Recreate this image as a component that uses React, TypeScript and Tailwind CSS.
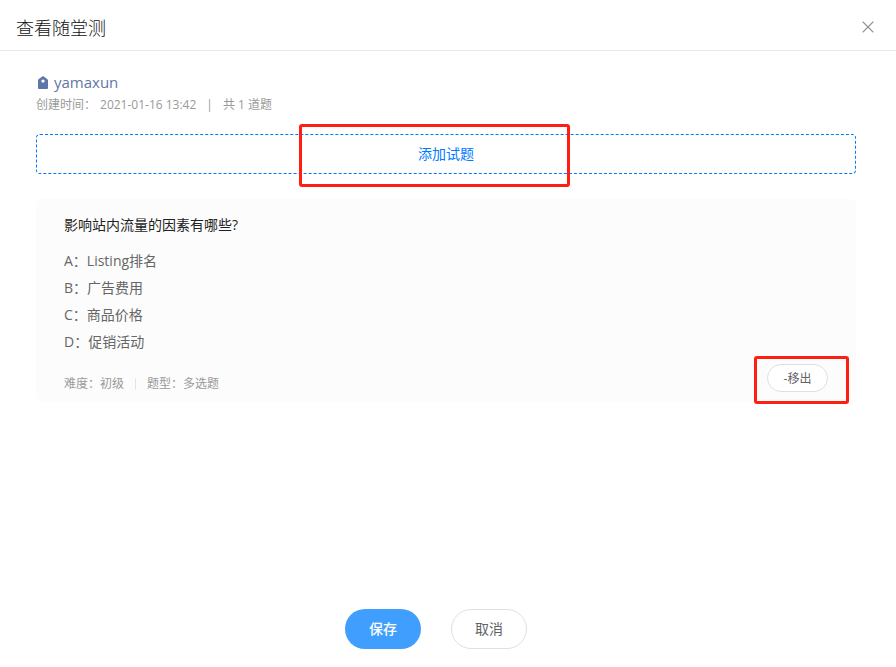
import { X } from 'lucide-react';

const question = {
  title: '影响站内流量的因素有哪些?',
  options: [
    { key: 'A', text: 'Listing排名' },
    { key: 'B', text: '广告费用' },
    { key: 'C', text: '商品价格' },
    { key: 'D', text: '促销活动' },
  ],
  level: '初级',
  type: '多选题',
};

function TagIcon() {
  return (
    <svg viewBox="0 0 10 13" className="w-[10px] h-[13px]" fill="#5f76a8" aria-hidden="true">
      <path
        fillRule="evenodd"
        d="M5 0 9.2 2.9Q10 3.5 10 4.5V12Q10 13 9 13H1Q0 13 0 12V4.5Q0 3.5.8 2.9ZM5 3.4A1.7 1.7 0 1 0 5 6.8 1.7 1.7 0 1 0 5 3.4Z"
      />
    </svg>
  );
}

function Highlight({ className }: { className: string }) {
  return (
    <div
      className={`absolute border-3 border-[#ff1e12] rounded-[3px] pointer-events-none ${className}`}
    />
  );
}

export default function App() {
  return (
    <div className="min-h-screen flex flex-col bg-white font-['Open_Sans','Noto_Sans_CJK_SC',sans-serif]">
      {/* Header */}
      <header className="flex items-center justify-between h-[51px] pt-1 pl-4 pr-[18px] border-b border-[#ebebeb]">
        <h1 className="pt-[2px] text-lg font-light text-[#111111]">查看随堂测</h1>
        <button type="button" aria-label="关闭" className="text-[#909399]">
          <X className="w-5 h-5" strokeWidth={1.3} />
        </button>
      </header>

      <main className="flex-1 pl-9 pr-10 pt-5">
        <div className="flex items-center gap-[6px] pl-[2px] pb-[2px] text-[15px] leading-[22px] text-[#5f76a8]">
          <TagIcon />
          <span>yamaxun</span>
        </div>
        <div className="flex text-xs leading-5 text-[#999999]">
          <span>创建时间：</span>
          <span className="ml-1">2021-01-16 13:42</span>
          <span className="mx-[10px]">|</span>
          <span>共 1 道题</span>
        </div>

        {/* Add question */}
        <div className="relative mt-[19px]">
          <button
            type="button"
            className="block w-full h-10 border border-dashed border-[#007aff] rounded-sm text-sm text-[#007aff]"
          >
            添加试题
          </button>
          <Highlight className="left-[263px] -top-[10px] w-[271px] h-[63px]" />
        </div>

        {/* Question card */}
        <section className="mt-[25px] pt-4 pb-[10px] pl-7 pr-7 rounded-md bg-[#fcfcfc]">
          <h2 className="text-sm leading-5 text-[#222222]">{question.title}</h2>
          <ul className="mt-3 text-sm leading-[27px] text-[#666666]">
            {question.options.map((option) => (
              <li key={option.key}>
                {option.key}：{option.text}
              </li>
            ))}
          </ul>
          <div className="flex items-end justify-between mt-[9px]">
            <div className="flex items-center text-xs leading-4 text-[#999999]">
              <span>难度：{question.level}</span>
              <span className="w-px h-3 mx-[11px] bg-[#e6e6e6]" />
              <span>题型：{question.type}</span>
            </div>
            <div className="relative">
              <button
                type="button"
                className="block w-[61px] h-7 pt-[2px] border border-[#dcdfe6] rounded-full bg-white text-xs text-[#606266]"
              >
                -移出
              </button>
              <Highlight className="-left-[13px] -top-2 w-[95px] h-12" />
            </div>
          </div>
        </section>
      </main>

      {/* Actions */}
      <footer className="flex justify-center gap-[30px] pr-6 pb-[18px]">
        <button type="button" className="w-[76px] h-10 rounded-full bg-[#409eff] text-sm font-medium text-white">
          保存
        </button>
        <button
          type="button"
          className="w-[76px] h-10 border border-[#dcdfe6] rounded-full bg-white text-sm text-[#606266]"
        >
          取消
        </button>
      </footer>
    </div>
  );
}
